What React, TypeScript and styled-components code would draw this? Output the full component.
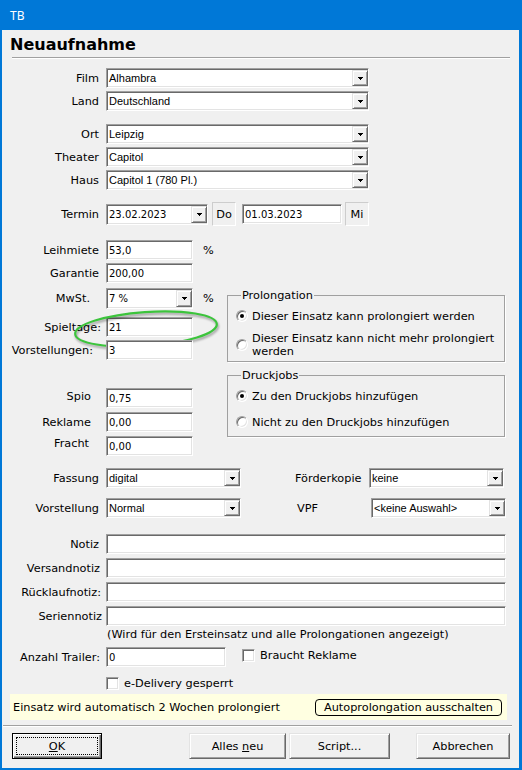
import React from 'react';
import styled, { createGlobalStyle, css } from 'styled-components';

const GlobalStyle = createGlobalStyle`
  html, body {
    margin: 0;
    padding: 0;
    background: #f0f0f0;
  }
  body {
    font-family: "DejaVu Sans", Verdana, sans-serif;
    font-size: 11.3px;
    color: #000;
  }
  * {
    box-sizing: border-box;
  }
`;

const sunken = css`
  border: 1px solid;
  border-color: #a0a0a0 #ffffff #ffffff #a0a0a0;
  box-shadow: inset 1px 1px 0 #696969, inset -1px -1px 0 #e3e3e3;
  background: #fff;
`;

const raised = css`
  border: 1px solid;
  border-color: #e3e3e3 #696969 #696969 #e3e3e3;
  box-shadow: inset 1px 1px 0 #fff, inset -1px -1px 0 #a0a0a0;
  background: #f0f0f0;
`;

const Window = styled.div`
  width: 522px;
  height: 770px;
  background: #f0f0f0;
  border: solid #0078d7;
  border-width: 0 3px 2px 2px;
  display: flex;
  flex-direction: column;
  overflow: hidden;
`;

const TitleBar = styled.div`
  height: 30px;
  flex: none;
  background: #0078d7;
  color: #fff;
  font-family: "Noto Sans", sans-serif;
  font-size: 12px;
  display: flex;
  align-items: center;
  padding-left: 8px;
`;

const Heading = styled.h1`
  margin: 5px 0 0 8px;
  height: 20px;
  line-height: 20px;
  font-size: 16px;
  font-weight: bold;
`;

const Separator = styled.div<{ $ml: number; $w: number; $top: number }>`
  margin-top: ${p => p.$top}px;
  margin-left: ${p => p.$ml}px;
  width: ${p => p.$w}px;
  height: 2px;
  border-top: 1px solid #a0a0a0;
  border-bottom: 1px solid #fff;
  flex: none;
`;

const Row = styled.div<{ $top: number; $h?: number }>`
  display: flex;
  align-items: center;
  margin-top: ${p => p.$top}px;
  height: ${p => p.$h ?? 20}px;
  flex: none;
  position: relative;
`;

const Label = styled.span<{ $pr?: number; $lift?: number }>`
  width: 104px;
  flex: none;
  padding-right: ${p => p.$pr ?? 7}px;
  margin-bottom: ${p => p.$lift ?? 0}px;
  text-align: right;
  white-space: nowrap;
`;

const SideLabel = styled.span<{ $ml: number }>`
  width: 74px;
  margin-left: ${p => p.$ml}px;
  flex: none;
  white-space: nowrap;
`;

const TextBox = styled.input<{ $w: number }>`
  ${sunken}
  width: ${p => p.$w}px;
  height: 20px;
  flex: none;
  padding: 0 0 0 2px;
  font-family: "DejaVu Sans", Verdana, sans-serif;
  font-size: 10px;
  color: #000;
  outline: none;
`;

const ComboBox = styled.div<{ $w: number; $h?: number }>`
  ${sunken}
  width: ${p => p.$w}px;
  height: ${p => p.$h ?? 20}px;
  flex: none;
  display: flex;
  align-items: stretch;
  padding: 1px 0 1px 0;
`;

const ComboText = styled.span<{ $ms?: boolean }>`
  flex: 1;
  display: flex;
  align-items: center;
  padding-left: 2px;
  white-space: nowrap;
  overflow: hidden;
  font-family: ${p => (p.$ms ? '"Liberation Sans", Arial, sans-serif' : '"DejaVu Sans", Verdana, sans-serif')};
  font-size: ${p => (p.$ms ? '11px' : '10px')};
`;

const ArrowButton = styled.span`
  ${raised}
  width: 16px;
  flex: none;
  display: flex;
  align-items: center;
  justify-content: center;
`;

const DayBox = styled.span<{ $ml: number }>`
  width: 24px;
  height: 24px;
  flex: none;
  margin-left: ${p => p.$ml}px;
  border: 1px solid;
  border-color: #cdcdcd #ffffff #ffffff #cdcdcd;
  display: flex;
  align-items: center;
  justify-content: center;
`;

const Unit = styled.span`
  margin-left: 10px;
`;

const Middle = styled.div`
  display: flex;
  margin-top: 14px;
  flex: none;
`;

const LeftCol = styled.div`
  width: 225px;
  flex: none;
  display: flex;
  flex-direction: column;
`;

const RightCol = styled.div`
  width: 278px;
  flex: none;
  padding-top: 49px;
  display: flex;
  flex-direction: column;
`;

const Group = styled.fieldset<{ $top: number; $pt: number; $pb: number; $gap: number }>`
  margin: ${p => p.$top}px 0 0 0;
  padding: ${p => p.$pt}px 0 ${p => p.$pb}px 8px;
  border: 1px solid #a0a0a0;
  box-shadow: 1px 1px 0 #fff;
  min-width: 0;
  display: flex;
  flex-direction: column;
  gap: ${p => p.$gap}px;
`;

const Legend = styled.legend`
  margin-left: 5px;
  padding: 0 1px;
  line-height: 13px;
`;

const Option = styled.label`
  display: flex;
  align-items: center;
  gap: 4px;
  line-height: 13px;
  min-height: 14px;
  white-space: nowrap;
`;

const RadioDot = styled.span<{ $on?: boolean }>`
  width: 12px;
  height: 12px;
  flex: none;
  border-radius: 50%;
  border: 1px solid;
  border-color: #a0a0a0 #ffffff #ffffff #a0a0a0;
  box-shadow: inset 1px 1px 0 #696969, inset -1px -1px 0 #e3e3e3;
  background: #fff;
  display: flex;
  align-items: center;
  justify-content: center;

  &::after {
    content: '';
    width: 4px;
    height: 4px;
    border-radius: 50%;
    background: ${p => (p.$on ? '#000' : 'transparent')};
  }
`;

const CheckBox = styled.span`
  ${sunken}
  width: 13px;
  height: 13px;
  flex: none;
`;

const CheckOption = styled.label<{ $ml: number; $lift?: number }>`
  display: flex;
  align-items: center;
  gap: 5px;
  margin-left: ${p => p.$ml}px;
  margin-bottom: ${p => p.$lift ?? 0}px;
  white-space: nowrap;
`;

const Caption = styled.div`
  margin: 2px 0 0 105px;
  line-height: 13px;
  white-space: nowrap;
  flex: none;
`;

const InfoBar = styled.div`
  margin: 4px 0 0 8px;
  width: 497px;
  height: 26px;
  flex: none;
  background: #ffffe1;
  display: flex;
  align-items: center;
  justify-content: space-between;
  padding: 0 5px 0 3px;
`;

const LinkButton = styled.button`
  width: 187px;
  height: 17px;
  padding: 0;
  border: 1px solid #000;
  border-radius: 4px;
  background: transparent;
  font-family: "DejaVu Sans", Verdana, sans-serif;
  font-size: 11.3px;
  color: #000;
`;

const ButtonRow = styled.div`
  display: flex;
  margin-top: 6px;
  flex: none;
`;

const PushButton = styled.button<{ $w: number; $ml: number; $default?: boolean }>`
  ${raised}
  width: ${p => p.$w}px;
  height: 26px;
  margin-left: ${p => p.$ml}px;
  padding: 3px;
  display: flex;
  font-family: "DejaVu Sans", Verdana, sans-serif;
  font-size: 11.3px;
  color: #000;
  ${p =>
    p.$default &&
    css`
      border-color: #000;
      box-shadow: inset 1px 1px 0 #fff, inset -1px -1px 0 #696969, inset -2px -2px 0 #a0a0a0;
    `}
`;

const ButtonFace = styled.span<{ $focus?: boolean }>`
  flex: 1;
  display: flex;
  align-items: center;
  justify-content: center;
  border: 1px ${p => (p.$focus ? 'dotted #000' : 'solid transparent')};
`;

const Marker = styled.svg`
  position: absolute;
  left: 66px;
  top: -10px;
  pointer-events: none;
  overflow: visible;
  filter: drop-shadow(1px 2px 1px rgba(0, 0, 0, 0.35));
`;

const Arrow = () => (
  <svg width="5" height="3" shapeRendering="crispEdges">
    <rect x="0" y="0" width="5" height="1" fill="#000" />
    <rect x="1" y="1" width="3" height="1" fill="#000" />
    <rect x="2" y="2" width="1" height="1" fill="#000" />
  </svg>
);

const Combo = ({ w, h, value, ms = true }: { w: number; h?: number; value: string; ms?: boolean }) => (
  <ComboBox $w={w} $h={h}>
    <ComboText $ms={ms}>{value}</ComboText>
    <ArrowButton>
      <Arrow />
    </ArrowButton>
  </ComboBox>
);

const Radio = ({ on, children }: { on?: boolean; children: React.ReactNode }) => (
  <Option>
    <RadioDot $on={on} />
    <span>{children}</span>
  </Option>
);

export default function App() {
  return (
    <>
      <GlobalStyle />
      <Window>
        <TitleBar>TB</TitleBar>
        <Heading>Neuaufnahme</Heading>
        <Separator $top={2} $ml={10} $w={498} />

        <Row $top={9}>
          <Label>Film</Label>
          <Combo w={263} value="Alhambra" />
        </Row>
        <Row $top={3}>
          <Label>Land</Label>
          <Combo w={263} value="Deutschland" />
        </Row>

        <Row $top={13}>
          <Label>Ort</Label>
          <Combo w={263} value="Leipzig" />
        </Row>
        <Row $top={3}>
          <Label>Theater</Label>
          <Combo w={263} value="Capitol" />
        </Row>
        <Row $top={3}>
          <Label>Haus</Label>
          <Combo w={263} value="Capitol 1 (780 Pl.)" />
        </Row>

        <Row $top={12} $h={24}>
          <Label>Termin</Label>
          <Combo w={102} h={21} value="23.02.2023" ms={false} />
          <DayBox $ml={4}>Do</DayBox>
          <TextBox $w={100} readOnly value="01.03.2023" style={{ marginLeft: 6 }} />
          <DayBox $ml={3}>Mi</DayBox>
        </Row>

        <Middle>
          <LeftCol>
            <Row $top={0}>
              <Label>Leihmiete</Label>
              <TextBox $w={87} readOnly value="53,0" />
              <Unit>%</Unit>
            </Row>
            <Row $top={3}>
              <Label>Garantie</Label>
              <TextBox $w={87} readOnly value="200,00" />
            </Row>
            <Row $top={5} $h={21}>
              <Label $pr={16}>MwSt.</Label>
              <Combo w={87} h={21} value="7 %" ms={false} />
              <Unit>%</Unit>
            </Row>
            <Row $top={8}>
              <Label $pr={5}>Spieltage:</Label>
              <TextBox $w={87} readOnly value="21" />
              <Marker width="156" height="44">
                <ellipse
                  cx="78"
                  cy="22"
                  rx="71"
                  ry="17"
                  fill="none"
                  stroke="#3cc43c"
                  strokeWidth="2.2"
                  transform="rotate(-4 78 22)"
                />
              </Marker>
            </Row>
            <Row $top={3}>
              <Label $pr={13}>Vorstellungen:</Label>
              <TextBox $w={87} readOnly value="3" />
            </Row>

            <Row $top={28}>
              <Label $pr={15} $lift={3}>Spio</Label>
              <TextBox $w={87} readOnly value="0,75" />
            </Row>
            <Row $top={4}>
              <Label $pr={15}>Reklame</Label>
              <TextBox $w={87} readOnly value="0,00" />
            </Row>
            <Row $top={4}>
              <Label $pr={17} $lift={5}>Fracht</Label>
              <TextBox $w={87} readOnly value="0,00" />
            </Row>
          </LeftCol>

          <RightCol>
            <Group $top={0} $pt={7} $pb={3} $gap={9}>
              <Legend>Prolongation</Legend>
              <Radio on>Dieser Einsatz kann prolongiert werden</Radio>
              <Radio>
                Dieser Einsatz kann nicht mehr prolongiert
                <br />
                werden
              </Radio>
            </Group>
            <Group $top={7} $pt={7} $pb={7} $gap={12}>
              <Legend>Druckjobs</Legend>
              <Radio on>Zu den Druckjobs hinzufügen</Radio>
              <Radio>Nicht zu den Druckjobs hinzufügen</Radio>
            </Group>
          </RightCol>
        </Middle>

        <Row $top={12}>
          <Label>Fassung</Label>
          <Combo w={135} value="digital" />
          <SideLabel $ml={54}>Förderkopie</SideLabel>
          <Combo w={135} value="keine" />
        </Row>
        <Row $top={10}>
          <Label>Vorstellung</Label>
          <Combo w={135} value="Normal" />
          <SideLabel $ml={56}>VPF</SideLabel>
          <Combo w={135} value="<keine Auswahl>" />
        </Row>

        <Row $top={16}>
          <Label>Notiz</Label>
          <TextBox $w={400} readOnly value="" />
        </Row>
        <Row $top={4}>
          <Label $pr={6}>Versandnotiz</Label>
          <TextBox $w={400} readOnly value="" />
        </Row>
        <Row $top={4}>
          <Label $pr={5}>Rücklaufnotiz:</Label>
          <TextBox $w={400} readOnly value="" />
        </Row>
        <Row $top={4}>
          <Label $pr={4}>Seriennotiz</Label>
          <TextBox $w={400} readOnly value="" />
        </Row>
        <Caption>(Wird für den Ersteinsatz und alle Prolongationen angezeigt)</Caption>

        <Row $top={6}>
          <Label $pr={6}>Anzahl Trailer:</Label>
          <TextBox $w={120} readOnly value="0" />
          <CheckOption $ml={16} $lift={4}>
            <CheckBox />
            Braucht Reklame
          </CheckOption>
        </Row>
        <Row $top={9} $h={14}>
          <CheckOption $ml={104}>
            <CheckBox />
            e-Delivery gesperrt
          </CheckOption>
        </Row>

        <InfoBar>
          <span>Einsatz wird automatisch 2 Wochen prolongiert</span>
          <LinkButton>Autoprolongation ausschalten</LinkButton>
        </InfoBar>

        <Separator $top={5} $ml={1} $w={509} />

        <ButtonRow>
          <PushButton $w={90} $ml={10} $default>
            <ButtonFace $focus>
              <u>O</u>K
            </ButtonFace>
          </PushButton>
          <PushButton $w={97} $ml={87}>
            <ButtonFace>
              Alles&nbsp;<u>n</u>eu
            </ButtonFace>
          </PushButton>
          <PushButton $w={101} $ml={3}>
            <ButtonFace>Script...</ButtonFace>
          </PushButton>
          <PushButton $w={94} $ml={26}>
            <ButtonFace>Abbrechen</ButtonFace>
          </PushButton>
        </ButtonRow>
      </Window>
    </>
  );
}
